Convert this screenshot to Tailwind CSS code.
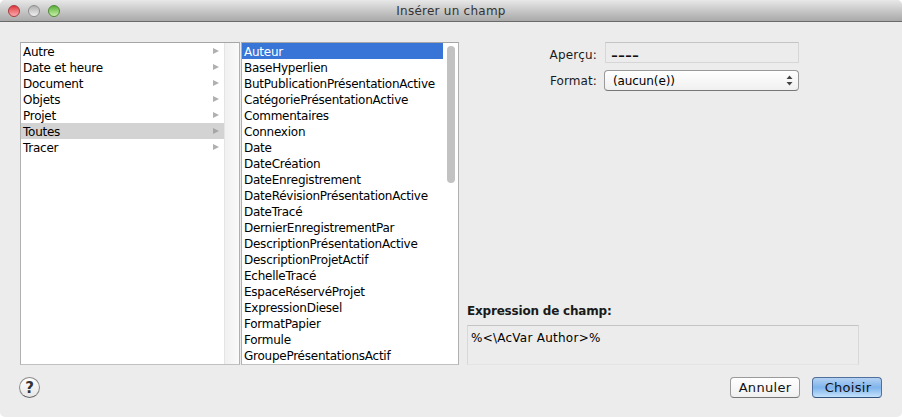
<!DOCTYPE html>
<html lang="fr">
<head>
  <meta charset="UTF-8" />
  <title>Insérer un champ</title>
  <script src="https://cdn.jsdelivr.net/npm/@tailwindcss/browser@4"></script>
</head>
<body class="bg-white overflow-hidden">
  <div class="w-[902px] h-[417px] flex flex-col bg-[#ececec] rounded-[5px] font-['DejaVu_Sans',sans-serif] text-[12px] leading-[18px] text-black">
    <!-- Title bar -->
    <div class="relative h-[22px] shrink-0 flex items-center justify-center rounded-t-[5px] border-b border-[#6a6a6a] bg-gradient-to-b from-[#e8e8e8] to-[#a9a9a9]">
      <div class="absolute left-[8px] top-[5px] flex gap-[8px]">
        <span class="w-[12px] h-[12px] rounded-full border border-[#a83a3a] bg-gradient-to-b from-[#e0303c] to-[#f8a8b0]"></span>
        <span class="w-[12px] h-[12px] rounded-full border border-[#8e8e8e] bg-gradient-to-b from-[#b0b0b0] to-[#f0f0f0]"></span>
        <span class="w-[12px] h-[12px] rounded-full border border-[#4f8a34] bg-gradient-to-b from-[#58b034] to-[#c8f0a8]"></span>
      </div>
      <span class="text-[#333] text-[12px] tracking-[0.25px]">Insérer un champ</span>
    </div>

    <div class="flex flex-1 pt-[20px] pl-[20px]">
      <!-- Category list -->
      <div class="w-[220px] h-[323px] border border-[#a6a6a6] border-b-[#c0c0c0] border-x-[#b0b0b0] bg-white flex tracking-[-0.25px]">
        <ul class="w-[203px]">
          <li class="h-[16px] pl-[2px] pr-[4px] flex justify-between">Autre<svg class="self-center" width="8" height="8" viewBox="0 0 8 8"><path d="M1 1l6 3-6 3z" fill="#b0b0b0"/></svg></li>
          <li class="h-[16px] pl-[2px] pr-[4px] flex justify-between">Date et heure<svg class="self-center" width="8" height="8" viewBox="0 0 8 8"><path d="M1 1l6 3-6 3z" fill="#b0b0b0"/></svg></li>
          <li class="h-[16px] pl-[2px] pr-[4px] flex justify-between">Document<svg class="self-center" width="8" height="8" viewBox="0 0 8 8"><path d="M1 1l6 3-6 3z" fill="#b0b0b0"/></svg></li>
          <li class="h-[16px] pl-[2px] pr-[4px] flex justify-between">Objets<svg class="self-center" width="8" height="8" viewBox="0 0 8 8"><path d="M1 1l6 3-6 3z" fill="#b0b0b0"/></svg></li>
          <li class="h-[16px] pl-[2px] pr-[4px] flex justify-between">Projet<svg class="self-center" width="8" height="8" viewBox="0 0 8 8"><path d="M1 1l6 3-6 3z" fill="#b0b0b0"/></svg></li>
          <li class="h-[16px] pl-[2px] pr-[4px] flex justify-between bg-[#d3d3d3]">Toutes<svg class="self-center" width="8" height="8" viewBox="0 0 8 8"><path d="M1 1l6 3-6 3z" fill="#a6a6a6"/></svg></li>
          <li class="h-[16px] pl-[2px] pr-[4px] flex justify-between">Tracer<svg class="self-center" width="8" height="8" viewBox="0 0 8 8"><path d="M1 1l6 3-6 3z" fill="#b0b0b0"/></svg></li>
        </ul>
        <div class="flex-1 border-l border-[#e4e4e4] bg-gradient-to-r from-[#f0f0f0] to-[#fafafa]"></div>
      </div>

      <!-- Field list -->
      <div class="ml-[1px] w-[218px] h-[323px] border border-[#a6a6a6] border-b-[#c0c0c0] border-x-[#b0b0b0] bg-white flex overflow-hidden tracking-[-0.25px]">
        <ul class="w-[201px] overflow-hidden">
          <li class="h-[16px] pl-[2px] bg-[#3875d7] text-white">Auteur</li>
          <li class="h-[16px] pl-[2px]">BaseHyperlien</li>
          <li class="h-[16px] pl-[2px]">ButPublicationPrésentationActive</li>
          <li class="h-[16px] pl-[2px]">CatégoriePrésentationActive</li>
          <li class="h-[16px] pl-[2px]">Commentaires</li>
          <li class="h-[16px] pl-[2px]">Connexion</li>
          <li class="h-[16px] pl-[2px]">Date</li>
          <li class="h-[16px] pl-[2px]">DateCréation</li>
          <li class="h-[16px] pl-[2px]">DateEnregistrement</li>
          <li class="h-[16px] pl-[2px]">DateRévisionPrésentationActive</li>
          <li class="h-[16px] pl-[2px]">DateTracé</li>
          <li class="h-[16px] pl-[2px]">DernierEnregistrementPar</li>
          <li class="h-[16px] pl-[2px]">DescriptionPrésentationActive</li>
          <li class="h-[16px] pl-[2px]">DescriptionProjetActif</li>
          <li class="h-[16px] pl-[2px]">EchelleTracé</li>
          <li class="h-[16px] pl-[2px]">EspaceRéservéProjet</li>
          <li class="h-[16px] pl-[2px]">ExpressionDiesel</li>
          <li class="h-[16px] pl-[2px]">FormatPapier</li>
          <li class="h-[16px] pl-[2px]">Formule</li>
          <li class="h-[16px] pl-[2px]">GroupePrésentationsActif</li>
        </ul>
        <div class="flex-1 pt-[3px] pl-[4px]">
          <div class="w-[8px] h-[137px] rounded-[4px] bg-[#c2c2c2]"></div>
        </div>
      </div>

      <!-- Right column -->
      <div class="ml-[8px] w-[393px] h-[323px] flex flex-col">
        <div class="flex items-center h-[21px]">
          <span class="w-[130px] pt-[4px] text-right text-[#1a1a1a] tracking-[0.2px]">Aperçu:</span>
          <div class="ml-[8px] w-[194px] h-[21px] border border-[#d6d6d6] border-t-[#c4c4c4] pl-[5px] font-['Liberation_Sans',sans-serif] text-[21px] leading-[23px] text-[#111]">----</div>
        </div>
        <div class="flex items-center h-[21px] mt-[7px]">
          <span class="w-[130px] text-right text-[#1a1a1a] tracking-[0.1px]">Format:</span>
          <div class="ml-[7px] w-[195px] h-[21px] rounded-[4px] border border-[#9a9a9a] border-b-[#777] bg-gradient-to-b from-white to-[#f0f0f0] flex items-center justify-between pl-[8px] pr-[5px] tracking-[-0.1px]">
            <span>(aucun(e))</span>
            <svg width="7" height="11" viewBox="0 0 7 11"><path d="M3.5 0.5l3 3.5h-6zM3.5 10.5l3-3.5h-6z" fill="#444"/></svg>
          </div>
        </div>
        <div class="mt-auto">
          <p class="font-bold text-[12px] tracking-[-0.2px] text-[#1a1a1a] mb-[5px]">Expression de champ:</p>
          <div class="w-[392px] h-[40px] border border-[#c4c4c4] border-b-[#e4e4e4] border-x-[#d8d8d8] pl-[3px] pt-[3px] tracking-[0.25px]">%&lt;\AcVar Author&gt;%</div>
        </div>
      </div>
    </div>

    <!-- Footer -->
    <div class="h-[52px] shrink-0 flex items-start justify-between pl-[19px] pr-[20px]">
      <div class="mt-[12px] w-[21px] h-[21px] rounded-full border border-[#8a8a8a] border-b-[#666] bg-gradient-to-b from-white to-[#e6e6e6] flex items-center justify-center font-bold text-[15px] text-[#333]">?</div>
      <div class="flex gap-[12px] mt-[12px]">
        <button class="w-[70px] h-[21px] rounded-[4px] border border-[#9a9a9a] border-b-[#777] bg-gradient-to-b from-white to-[#f0f0f0] text-[13px] tracking-[0.3px] leading-[18px] text-[#111]">Annuler</button>
        <button class="w-[70px] h-[21px] pl-[2px] rounded-[4px] border border-[#4f6f9c] border-b-[#34527e] bg-gradient-to-b from-[#b4d2f2] via-[#7fb4ec] to-[#c4e2fb] text-[13px] tracking-[0.3px] leading-[18px] text-[#111]">Choisir</button>
      </div>
    </div>
  </div>
</body>
</html>
